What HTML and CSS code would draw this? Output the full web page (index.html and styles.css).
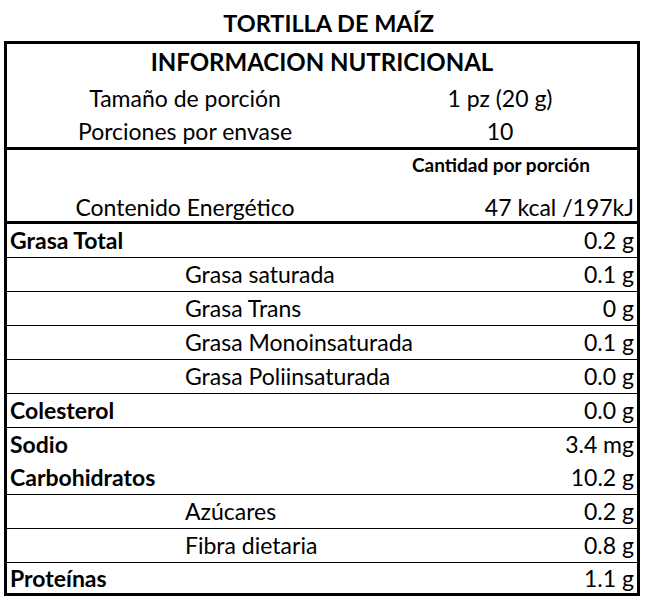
FILE: index.html
```html
<!DOCTYPE html>
<html lang="es">
<head>
<meta charset="utf-8">
<title>Tortilla de maíz - Información nutricional</title>
<link rel="stylesheet" href="styles.css">
</head>
<body>
<h1 class="title">TORTILLA DE MAÍZ</h1>
<div class="label">
  <section class="head">
    <div class="head-title">INFORMACION NUTRICIONAL</div>
    <div class="pair pair-a"><span class="col-l">Tamaño de porción</span><span class="col-r">1 pz (20 g)</span></div>
    <div class="pair pair-b"><span class="col-l">Porciones por envase</span><span class="col-r">10</span></div>
  </section>
  <section class="energy">
    <div class="pair amount"><span class="col-l"></span><span class="col-r">Cantidad por porción</span></div>
    <div class="pair energy-row"><span class="col-l">Contenido Energético</span><span class="col-val">47 kcal /197kJ</span></div>
  </section>
  <section class="rows">
    <div class="row main"><span>Grasa Total</span><span>0.2 g</span></div>
    <div class="row sub"><span>Grasa saturada</span><span>0.1 g</span></div>
    <div class="row sub"><span>Grasa Trans</span><span>0 g</span></div>
    <div class="row sub"><span>Grasa Monoinsaturada</span><span>0.1 g</span></div>
    <div class="row sub"><span>Grasa Poliinsaturada</span><span>0.0 g</span></div>
    <div class="row main"><span>Colesterol</span><span>0.0 g</span></div>
    <div class="row main no-line"><span>Sodio</span><span>3.4 mg</span></div>
    <div class="row main"><span>Carbohidratos</span><span>10.2 g</span></div>
    <div class="row sub"><span>Azúcares</span><span>0.2 g</span></div>
    <div class="row sub"><span>Fibra dietaria</span><span>0.8 g</span></div>
    <div class="row main last"><span>Proteínas</span><span>1.1 g</span></div>
  </section>
</div>
</body>
</html>
```

FILE: styles.css
```css
* { box-sizing: border-box; }

html, body {
  margin: 0;
  padding: 0;
  background: #fff;
}

body {
  width: 654px;
  font-family: Lato, "Noto Sans", sans-serif;
  font-size: 23px;
  color: #000;
}

.title {
  margin: 0;
  height: 41px;
  padding-top: 6px;
  line-height: 35px;
  font-size: 23.5px;
  font-weight: 700;
  text-align: center;
  padding-left: 3px;
}

.label {
  margin-left: 4px;
  width: 636px;
  border: 3px solid #000;
}

.head {
  border-bottom: 3px solid #000;
}

.head-title {
  height: 36px;
  line-height: 36px;
  text-align: center;
  font-size: 24px;
  font-weight: 700;
}

.pair {
  display: grid;
  grid-template-columns: 356px 1fr;
}

.pair-a { height: 36px; line-height: 36px; }
.pair-b { height: 31px; line-height: 31px; }

.col-l, .col-r { text-align: center; white-space: nowrap; }

.energy {
  border-bottom: 3px solid #000;
}

.amount {
  height: 30px;
  line-height: 30px;
}

.amount .col-r {
  font-size: 19px;
  font-weight: 700;
  padding-left: 2px;
}

.energy-row {
  height: 41px;
  padding-top: 14px;
  line-height: 27px;
}

.col-val {
  text-align: right;
  padding-right: 3px;
  white-space: nowrap;
}

.row {
  display: flex;
  justify-content: space-between;
  height: 34px;
  line-height: 33px;
  border-bottom: 1px solid #000;
  padding: 0 3px;
  white-space: nowrap;
}

.row.no-line { border-bottom: none; height: 33px; }

.row.main span:first-child { font-weight: 700; }

.row.sub { padding-left: 178px; }

.row.last {
  border-bottom: none;
  height: 30px;
  line-height: 30px;
}
```
